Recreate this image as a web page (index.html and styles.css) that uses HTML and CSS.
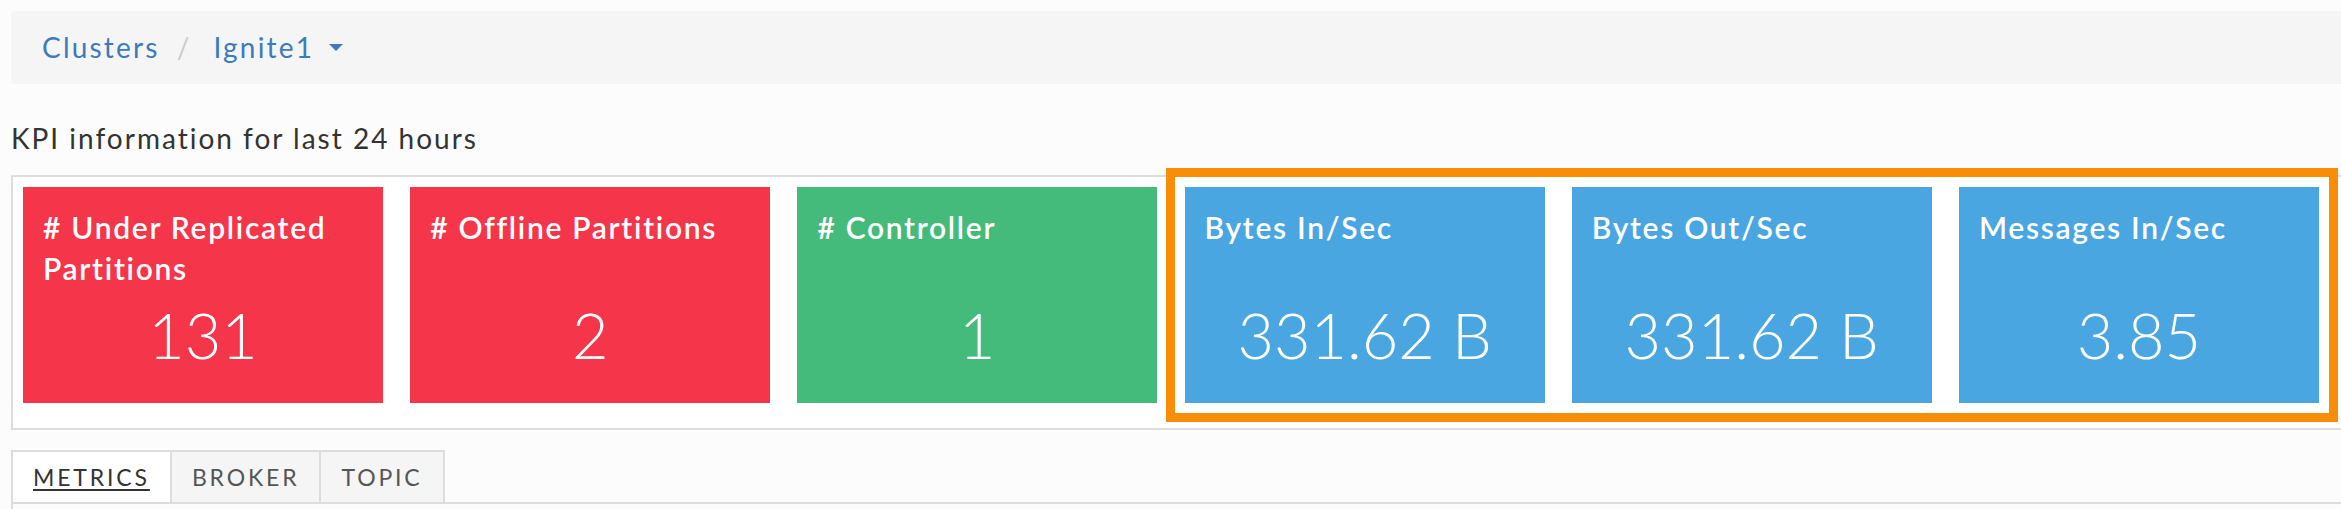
FILE: index.html
```
<!DOCTYPE html>
<html>
<head>
<meta charset="utf-8">
<link rel="stylesheet" href="styles.css">
</head>
<body>
<div class="page">
  <nav class="breadcrumb">
    <a class="crumb">Clusters</a>
    <span class="sep">/</span>
    <a class="crumb">Ignite1</a>
    <span class="caret"></span>
  </nav>
  <p class="kpi-label">KPI information for last 24 hours</p>
  <section class="kpi-panel">
    <div class="card red">
      <div class="card-title"># Under Replicated Partitions</div>
      <div class="card-value">131</div>
    </div>
    <div class="card red">
      <div class="card-title"># Offline Partitions</div>
      <div class="card-value">2</div>
    </div>
    <div class="card green">
      <div class="card-title"># Controller</div>
      <div class="card-value">1</div>
    </div>
    <div class="card blue">
      <div class="card-title">Bytes In/Sec</div>
      <div class="card-value">331.62 B</div>
    </div>
    <div class="card blue">
      <div class="card-title">Bytes Out/Sec</div>
      <div class="card-value">331.62 B</div>
    </div>
    <div class="card blue">
      <div class="card-title">Messages In/Sec</div>
      <div class="card-value">3.85</div>
    </div>
    <div class="highlight"></div>
  </section>
  <ul class="tabs">
    <li class="tab active"><span>METRICS</span></li>
    <li class="tab">BROKER</li>
    <li class="tab">TOPIC</li>
  </ul>
  <div class="tab-content"></div>
</div>
</body>
</html>
```
FILE: styles.css
```
html, body {
  margin: 0;
  overflow: hidden;
  background: #fcfcfc;
}
body {
  font-family: Lato, "Open Sans", sans-serif;
  color: #333;
}
.page {
  width: 2340px;
  padding: 11px;
  box-sizing: content-box;
}
.breadcrumb {
  display: flex;
  align-items: center;
  height: 73px;
  box-sizing: border-box;
  padding: 0 0 2px 31px;
  background: #f5f5f5;
  border-radius: 4px;
  font-size: 28px;
  letter-spacing: 2.2px;
}
.crumb {
  color: #3b7bbf;
}
.sep {
  color: #ccc;
  margin: 0 22px 0 17px;
}
.caret {
  width: 0;
  height: 0;
  margin-left: 15px;
  margin-top: 2px;
  border-top: 7px solid #3b7bbf;
  border-left: 7px solid transparent;
  border-right: 7px solid transparent;
}
.kpi-label {
  margin: 37px 0 20px 0;
  font-size: 28px;
  line-height: 34px;
  letter-spacing: 2px;
}
.kpi-panel {
  position: relative;
  display: flex;
  gap: 27.2px;
  padding: 10px 10px 25px 10px;
  background: #fff;
  border: 2px solid #ddd;
}
.card {
  flex: 0 0 360px;
  height: 216px;
  box-sizing: border-box;
  padding: 20px 20px 0 20px;
  color: #fff;
}
.red { background: #f5364a; }
.green { background: #45bb7b; }
.blue { background: #4aa6e0; }
.card-title {
  height: 82px;
  font-size: 30px;
  line-height: 41px;
  font-weight: 600;
  letter-spacing: 1.7px;
}
.card-value {
  margin-top: 9px;
  text-align: center;
  font-size: 63px;
  line-height: 74px;
  font-weight: 300;
}
.highlight {
  position: absolute;
  left: 1153px;
  top: -9px;
  width: 1172px;
  height: 254px;
  box-sizing: border-box;
  border: 9px solid #f98d07;
}
.tabs {
  display: flex;
  margin: 20px 0 0 0;
  padding: 0;
  list-style: none;
  border-bottom: 2px solid #ddd;
}
.tab {
  padding: 0 20px;
  height: 50px;
  line-height: 50px;
  font-size: 23px;
  letter-spacing: 2.85px;
  color: #555;
  background: #f5f5f5;
  border: 2px solid #ddd;
  border-bottom: 0;
  border-left-width: 0;
}
.tab:first-child {
  border-left-width: 2px;
}
.tab.active {
  background: #fff;
  color: #333;
}
.tab.active span {
  text-decoration: underline;
  text-decoration-thickness: 2px;
  text-underline-offset: 3px;
}
.tab-content {
  height: 40px;
  border-left: 2px solid #ddd;
}
```
